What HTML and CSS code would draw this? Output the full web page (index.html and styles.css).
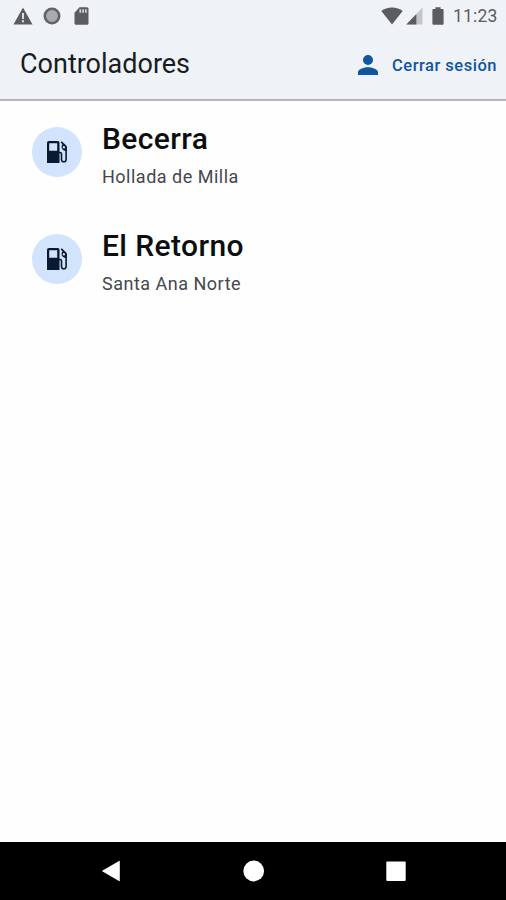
FILE: index.html
```html
<!DOCTYPE html>
<html lang="es">
<head>
  <meta charset="UTF-8">
  <title>Controladores</title>
  <link rel="stylesheet" href="styles.css">
</head>
<body>

  <header>
    <div class="statusBar">
      <svg class="warning" width="20" height="18" viewBox="0 0 20 18">
        <path fill="#5b5c60" d="M10 0.5L19.5 17.5H0.5z"/>
        <path fill="#dcdfe4" d="M9 6h2v6H9zM9 13.2h2v2H9z"/>
      </svg>
      <svg class="record" width="18" height="18" viewBox="0 0 18 18">
        <circle cx="9" cy="9" r="7.2" fill="#a9abae" stroke="#626467" stroke-width="2.6"/>
      </svg>
      <svg class="sdCard" width="15" height="18" viewBox="0 0 15 18">
        <path fill="#5b5c60" d="M5.5 0.3H13q1.5 0 1.5 1.5v14.4q0 1.5-1.5 1.5H2q-1.5 0-1.5-1.5V5.8z"/>
        <path fill="#d8dbe0" d="M5.5 2.2h1.6v3.6H5.5zM8.3 2.2h1.6v3.6H8.3zM11.1 2.2h1.6v3.6h-1.6z"/>
      </svg>
      <span class="spacer"></span>
      <svg class="wifi" width="22" height="18" viewBox="0 0 22 18">
        <path fill="#5b5c60" d="M11 17.5L0.3 4.1C3.1 1.8 6.8 0.5 11 0.5s7.9 1.3 10.7 3.6z"/>
      </svg>
      <svg class="signal" width="17" height="18" viewBox="0 0 17 18">
        <path fill="#c3c5ca" d="M16.5 0.5v17H0.3z"/>
        <path fill="#5b5c60" d="M10.4 7v10.5H0.3z"/>
      </svg>
      <svg class="battery" width="12" height="18" viewBox="0 0 12 18">
        <path fill="#5b5c60" d="M3.4 0.3h5.2v1.6h2q1 0 1 1v13.8q0 1-1 1H1.4q-1 0-1-1V2.9q0-1 1-1h2z"/>
      </svg>
      <span class="clock">11:23</span>
    </div>

    <div class="appBar">
      <h1>Controladores</h1>
      <button class="logout">
        <svg width="20" height="20" viewBox="0 0 20 20">
          <path fill="#0f569f" d="M10 10a5 5 0 1 0 0-10 5 5 0 0 0 0 10zM10 12.3C6.7 12.3 0 13.9 0 17.2V20h20v-2.8C20 13.9 13.3 12.3 10 12.3z"/>
        </svg>
        <span>Cerrar sesión</span>
      </button>
    </div>
  </header>

  <main>
    <div class="station">
      <div class="avatar">
        <svg width="22" height="24" viewBox="0 0 22 24">
          <path fill="#071a2f" fill-rule="evenodd" d="M2.8 1h8.9q1.8 0 1.8 1.8V23H1V2.8Q1 1 2.8 1zM3.2 3.2v7.6h8V3.2z"/>
          <path fill="none" stroke="#071a2f" stroke-width="1.6" d="M13 12.5h1q1.5 0 1.5 1.3v5.7q0 2.3 2.3 2.3t2.3-2.3V7.500q0-1-.7-1.700L15.200 1.800"/>
          <path fill="#071a2f" fill-rule="evenodd" d="M17 3.8l3.5 3v4q-2.500.4-4-1.200-2.200-3.300.5-5.800zM17.900 6a1.100 1.100 0 1 0 .01 2.400 1.100 1.100 0 0 0-.01-2.400z"/>
        </svg>
      </div>
      <div class="info">
        <h2>Becerra</h2>
        <p>Hollada de Milla</p>
      </div>
    </div>

    <div class="station">
      <div class="avatar">
        <svg width="22" height="24" viewBox="0 0 22 24">
          <path fill="#071a2f" fill-rule="evenodd" d="M2.8 1h8.9q1.8 0 1.8 1.8V23H1V2.8Q1 1 2.8 1zM3.2 3.2v7.6h8V3.2z"/>
          <path fill="none" stroke="#071a2f" stroke-width="1.6" d="M13 12.5h1q1.5 0 1.5 1.3v5.7q0 2.3 2.3 2.3t2.3-2.3V7.500q0-1-.7-1.700L15.200 1.800"/>
          <path fill="#071a2f" fill-rule="evenodd" d="M17 3.8l3.5 3v4q-2.500.4-4-1.200-2.200-3.300.5-5.800zM17.900 6a1.100 1.100 0 1 0 .01 2.400 1.100 1.100 0 0 0-.01-2.400z"/>
        </svg>
      </div>
      <div class="info">
        <h2>El Retorno</h2>
        <p>Santa Ana Norte</p>
      </div>
    </div>
  </main>

  <nav>
    <svg width="22" height="22" viewBox="0 0 22 22">
      <path fill="#fff" d="M19.8 1.3v19.4q0 .8-.8.4L2.600 11.600q-.9-.6 0-1.200L19 .9q.8-.4.8.4z"/>
    </svg>
    <svg width="22" height="22" viewBox="0 0 22 22">
      <circle cx="10.7" cy="11" r="10.4" fill="#fff"/>
    </svg>
    <svg width="22" height="22" viewBox="0 0 22 22">
      <rect x="1.3" y="1.5" width="19.4" height="19.4" rx="1" fill="#fff"/>
    </svg>
  </nav>

</body>
</html>
```

FILE: styles.css
```css
html, body {
  height: 100%;
  margin: 0;
  font-family: Roboto, sans-serif;
  overflow: hidden;
}

body {
  background-color: #fefefe;
  display: flex;
  flex-direction: column;
}

svg {
  display: block;
  flex-shrink: 0;
}

header {
  box-sizing: border-box;
  height: 101px;
  background-color: #eff3f8;
  border-bottom: 2px solid #b4b5b8;
}

.statusBar {
  display: flex;
  align-items: center;
  height: 31px;
  padding: 0 8px 0 13px;
}

.record {
  margin-left: 10px;
}

.sdCard {
  margin-left: 13px;
}

.spacer {
  flex: 1;
}

.signal {
  margin-left: 3px;
}

.battery {
  margin-left: 9px;
}

.clock {
  margin-left: 9px;
  width: 45px;
  font-size: 17.5px;
  letter-spacing: 0.2px;
  color: #5b5c60;
  white-space: nowrap;
}

.appBar {
  display: flex;
  align-items: center;
  justify-content: space-between;
  height: 66px;
  padding: 0 9px 0 20px;
}

h1 {
  margin: 0;
  font-size: 27px;
  font-weight: 400;
  color: #191c20;
}

.logout {
  display: flex;
  align-items: center;
  gap: 14px;
  margin-top: 2px;
  padding: 0;
  border: none;
  background: none;
  font-family: inherit;
  font-size: 16.5px;
  font-weight: 500;
  letter-spacing: 0.5px;
  color: #0f569f;
  cursor: pointer;
}

.logout span {
  width: 105px;
  white-space: nowrap;
}

main {
  flex: 1;
  padding-top: 16px;
}

.station {
  display: flex;
  height: 107px;
  padding-left: 32px;
}

.avatar {
  display: flex;
  align-items: center;
  justify-content: center;
  width: 50px;
  height: 50px;
  margin-top: 10px;
  border-radius: 50%;
  background-color: #d2e3fd;
}

.info {
  margin-left: 20px;
}

h2 {
  margin: 3px 0 0;
  font-size: 30px;
  font-weight: 500;
  line-height: 38px;
  letter-spacing: 0.4px;
  color: #0c0d0f;
}

p {
  margin: 7px 0 0;
  font-size: 18px;
  line-height: 24px;
  letter-spacing: 0.5px;
  color: #44474c;
}

nav {
  display: flex;
  align-items: center;
  justify-content: space-between;
  box-sizing: border-box;
  height: 58px;
  padding: 0 99px 0 100px;
  background-color: #000;
}
```
